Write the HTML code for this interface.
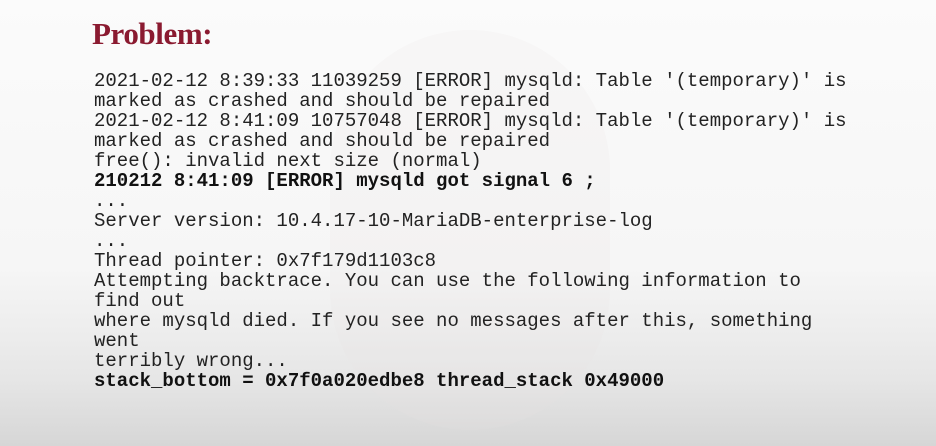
<!DOCTYPE html>
<html><head><meta charset="utf-8"><style>
html,body{margin:0;padding:0}
body{width:936px;height:446px;overflow:hidden;position:relative;
background:linear-gradient(to bottom,#fbfbfb 0%,#f6f6f6 60%,#e6e6e6 85%,#d6d6d6 100%);}
.wm{position:absolute;left:330px;top:30px;width:280px;height:400px;border-radius:140px;background:rgba(235,225,225,0.18);}
h1{position:absolute;left:92px;top:16px;margin:0;font:bold 31px "Liberation Serif",serif;color:#8a1a30;letter-spacing:-0.4px}
pre{position:absolute;left:94px;top:71px;margin:0;font:19px/20px "Courier New","Liberation Mono",monospace;color:#222;}
b{font-weight:bold;color:#111;letter-spacing:0}
</style></head><body>
<div class="wm"></div>
<h1>Problem:</h1>
<pre>2021-02-12 8:39:33 11039259 [ERROR] mysqld: Table '(temporary)' is
marked as crashed and should be repaired
2021-02-12 8:41:09 10757048 [ERROR] mysqld: Table '(temporary)' is
marked as crashed and should be repaired
free(): invalid next size (normal)
<b>210212 8:41:09 [ERROR] mysqld got signal 6 ;</b>
...
Server version: 10.4.17-10-MariaDB-enterprise-log
...
Thread pointer: 0x7f179d1103c8
Attempting backtrace. You can use the following information to
find out
where mysqld died. If you see no messages after this, something
went
terribly wrong...
<b>stack_bottom = 0x7f0a020edbe8 thread_stack 0x49000</b></pre>
</body></html>
